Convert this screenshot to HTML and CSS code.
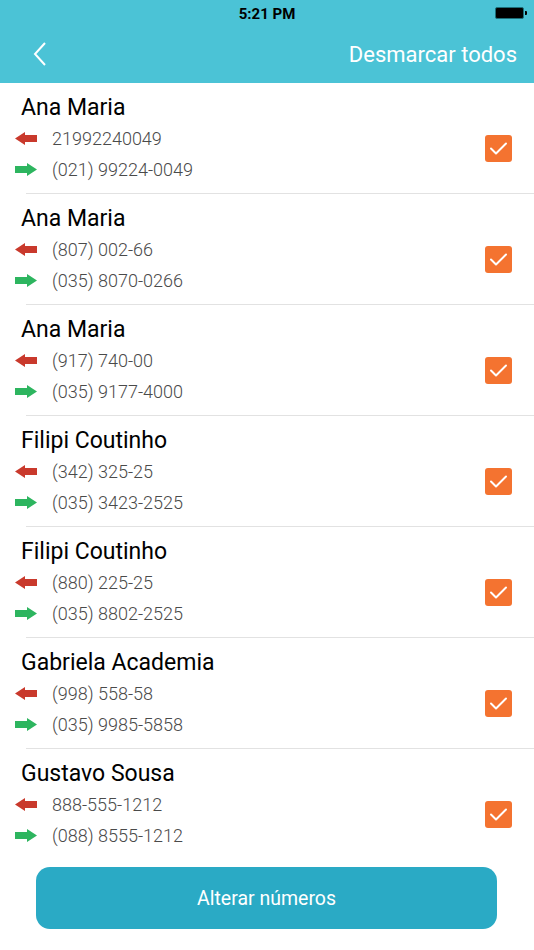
FILE: index.html
```html
<!DOCTYPE html>
<html lang="pt">
<head>
  <meta charset="UTF-8">
  <meta name="viewport" content="width=device-width, initial-scale=1.0">
  <title>Alterar números</title>
  <link rel="stylesheet" href="styles.css">
</head>
<body>
  <div class="header">
    <div class="status">
      <span class="time">5:21 PM</span>
      <span class="battery"><span class="nub"></span></span>
    </div>
    <div class="nav">
      <svg class="back" width="14" height="24" viewBox="0 0 14 24"><polyline points="12,1 2,12 12,23" fill="none" stroke="#fff" stroke-width="2"/></svg>
      <span class="nav-action">Desmarcar todos</span>
    </div>
  </div>

  <div class="list" id="list"></div>

  <div class="footer">
    <button type="button" class="change-btn">Alterar números</button>
  </div>

  <script>
    const contacts = [
      { name: "Ana Maria", from: "21992240049", to: "(021) 99224-0049" },
      { name: "Ana Maria", from: "(807) 002-66", to: "(035) 8070-0266" },
      { name: "Ana Maria", from: "(917) 740-00", to: "(035) 9177-4000" },
      { name: "Filipi Coutinho", from: "(342) 325-25", to: "(035) 3423-2525" },
      { name: "Filipi Coutinho", from: "(880) 225-25", to: "(035) 8802-2525" },
      { name: "Gabriela Academia", from: "(998) 558-58", to: "(035) 9985-5858" },
      { name: "Gustavo Sousa", from: "888-555-1212", to: "(088) 8555-1212" }
    ];

    const leftArrow = '<svg width="22" height="13" viewBox="0 0 22 13"><polygon points="0,6.5 10,0 10,3 22,3 22,10 10,10 10,13" fill="#c9392c"/></svg>';
    const rightArrow = '<svg width="22" height="13" viewBox="0 0 22 13"><polygon points="22,6.5 12,0 12,3 0,3 0,10 12,10 12,13" fill="#2db55f"/></svg>';
    const check = '<svg width="27" height="27" viewBox="0 0 27 27"><polyline points="6,13.5 11,18.5 21,8.5" fill="none" stroke="#fff" stroke-width="2" stroke-linecap="round" stroke-linejoin="round"/></svg>';

    let html = '';
    contacts.forEach(function (c) {
      html += `<div class="row">
        <div class="info">
          <div class="name">${c.name}</div>
          <div class="phone">${leftArrow}<span>${c.from}</span></div>
          <div class="phone">${rightArrow}<span>${c.to}</span></div>
        </div>
        <div class="checkbox">${check}</div>
      </div>`;
    });
    document.getElementById('list').innerHTML = html;
  </script>
</body>
</html>
```

FILE: styles.css
```css
body {
  margin: 0;
  font-family: Roboto, "Liberation Sans", sans-serif;
  background: #fff;
  width: 534px;
}
.header {
  background-color: #4bc3d6;
  height: 83px;
}
.status {
  height: 26px;
  position: relative;
  display: flex;
  justify-content: center;
  align-items: center;
}
.time {
  font-size: 15px;
  font-weight: bold;
  color: #000;
  padding-top: 2px;
}
.battery {
  position: absolute;
  left: 495px;
  top: 7px;
  width: 27px;
  height: 10px;
  background: #000;
  border: 1px solid #1d6f7a;
  border-radius: 2px;
}
.battery .nub {
  position: absolute;
  right: -4px;
  top: 3px;
  width: 2px;
  height: 4px;
  background: #000;
  border-radius: 0 1px 1px 0;
}
.nav {
  height: 57px;
  display: flex;
  align-items: center;
  justify-content: space-between;
  padding: 0 17px 0 33px;
}
.back {
  display: block;
  margin-top: -1px;
}
.nav-action {
  color: #fff;
  font-size: 22px;
}
.row {
  display: flex;
  justify-content: space-between;
  align-items: flex-start;
  padding: 10px 22px 9px 15px;
  background: linear-gradient(#e2e2e2, #e2e2e2) 26px 100% / calc(100% - 26px) 1px no-repeat;
}
.row:last-child {
  background: none;
}
.name {
  font-size: 23px;
  line-height: 30px;
  color: #000;
  margin-left: 6px;
}
.phone {
  display: flex;
  align-items: center;
  height: 31px;
  font-size: 18px;
  font-weight: 300;
  color: #4a4a4a;
}
.phone svg {
  margin-right: 15px;
  margin-top: -1px;
}
.checkbox {
  width: 27px;
  height: 27px;
  margin-top: 42px;
  background: #f47330;
  border-radius: 3px;
}
.checkbox svg {
  display: block;
}
.footer {
  padding: 7px 37px 0 36px;
}
.change-btn {
  width: 100%;
  height: 62px;
  border: none;
  border-radius: 14px;
  background-color: #2aaac5;
  color: #fff;
  font-family: Roboto, "Liberation Sans", sans-serif;
  font-size: 19.5px;
  cursor: pointer;
}
```
